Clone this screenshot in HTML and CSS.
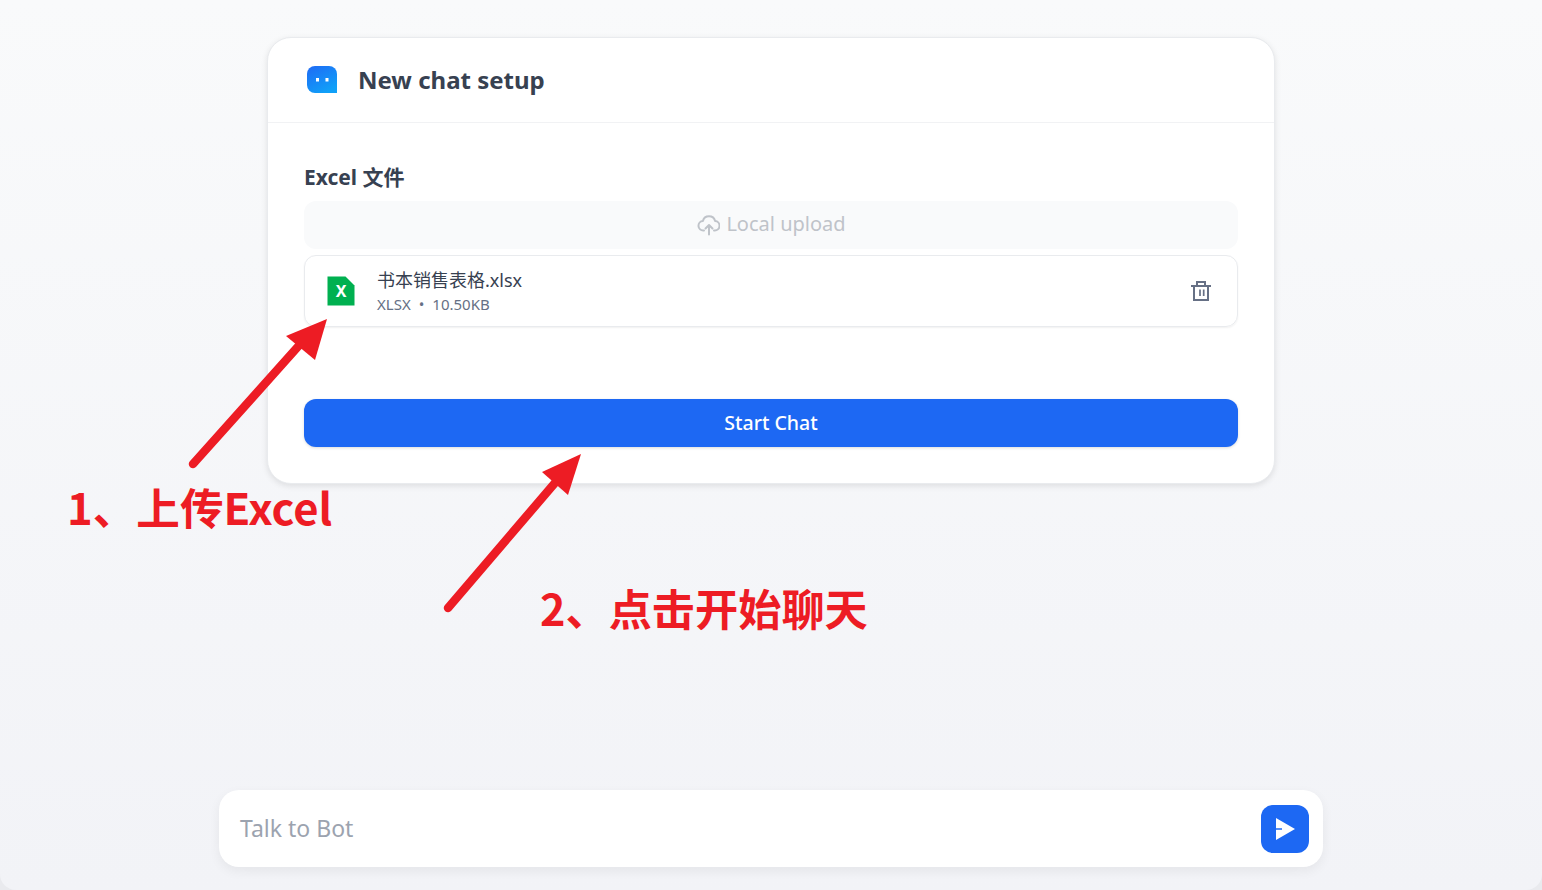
FILE: index.html
```html
<!DOCTYPE html>
<html lang="en">
<head>
    <meta charset="UTF-8">
    <title>New chat setup</title>
    <link rel="stylesheet" href="styles.css">
</head>
<body>
    <main class="page">
        <section class="setup-card">
            <header class="setup-header">
                <svg class="bot-icon" width="30" height="27" viewBox="0 0 30 27">
                    <defs>
                        <linearGradient id="bot-fill" x1="0" y1="0" x2="0.6" y2="1">
                            <stop offset="0" stop-color="#1f6af5"/>
                            <stop offset="1" stop-color="#10a0f8"/>
                        </linearGradient>
                    </defs>
                    <path d="M8 0h14a8 8 0 0 1 8 8v19H8a8 8 0 0 1-8-8V8a8 8 0 0 1 8-8z" fill="url(#bot-fill)"/>
                    <rect x="9" y="12" width="3" height="3.500" fill="#fff"/>
                    <rect x="18.500" y="12" width="3" height="3.500" fill="#fff"/>
                </svg>
                <h1 class="setup-title">New chat setup</h1>
            </header>

            <div class="setup-body">
                <label class="field-label">Excel 文件</label>
                <div class="upload-btn">
                    <svg width="24" height="24" viewBox="-1 0 24 24" fill="none" stroke="#bfc3c9" stroke-width="2" stroke-linecap="round" stroke-linejoin="round">
                        <path d="M7 17.500H6.500a4.700 4.700 0 0 1-.6-9.400 6.300 6.300 0 0 1 12.200 0 4.700 4.700 0 0 1-.6 9.400H17"/>
                        <path d="M12 21.500v-9M8.500 15.500l3.500-3.500 3.500 3.500"/>
                    </svg>
                    <span class="upload-text">Local upload</span>
                </div>

                <div class="file-row">
                    <svg class="file-icon" width="28" height="30" viewBox="0 0 28 30">
                        <path d="M0.500 0.500h18L27.500 9.500v20H0.500z" fill="#00b050"/>
                        <text x="14" y="21" class="file-icon-text">X</text>
                    </svg>
                    <div class="file-info">
                        <div class="file-name">书本销售表格.xlsx</div>
                        <div class="file-meta">XLSX<span class="dot">•</span>10.50KB</div>
                    </div>
                    <svg class="trash-icon" width="20" height="20" viewBox="0 0 20 20" fill="none" stroke="#667085" stroke-width="2">
                        <path d="M0 5h20M6 5V1h8v4M3 5v14h14V5"/>
                        <path d="M9 8.500v6.500M12.700 8.500v6.500" stroke-width="1.700"/>
                    </svg>
                </div>

                <button class="start-btn">Start Chat</button>
            </div>
        </section>

        <div class="composer">
            <span class="composer-placeholder">Talk to Bot</span>
            <div class="send-btn">
                <svg width="19" height="22" viewBox="0 0 19 22">
                    <path d="M0 0l19 11L0 22V11.700h6v-1.400H0z" fill="#fff"/>
                </svg>
            </div>
        </div>
    </main>

    <!-- annotations drawn on top of the screenshot -->
    <svg class="arrows" width="1542" height="890" viewBox="0 0 1542 890">
        <g fill="#ed1c24" stroke="#ed1c24" stroke-linecap="round">
            <path d="M193 464L303 341" stroke-width="8.500" fill="none"/>
            <path d="M327 319L286 336L315 360z" stroke="none"/>
            <path d="M448 608L560 477" stroke-width="8.500" fill="none"/>
            <path d="M581 454L542 472L568 495z" stroke="none"/>
        </g>
    </svg>
    <div class="note note-upload">1、上传Excel</div>
    <div class="note note-start">2、点击开始聊天</div>
</body>
</html>
```

FILE: styles.css
```css
* {
    box-sizing: border-box;
}

html {
    height: 100%;
    background: #e9eaee;
}

body {
    margin: 0;
    height: 100%;
    font-family: "Noto Sans", "Noto Sans CJK SC", sans-serif;
    color: #374151;
    overflow: hidden;
}

.page {
    height: 890px;
    display: flex;
    flex-direction: column;
    align-items: center;
    padding: 37px 0 23px;
    background: linear-gradient(180deg, #f9fafb 0%, #f2f3f7 100%);
    border-radius: 0 0 16px 16px;
}

.setup-card {
    width: 1008px;
    height: 447px;
    background: #fff;
    border: 1px solid #e9ebee;
    border-radius: 24px;
    box-shadow: 0 2px 6px rgba(0, 0, 0, 0.1);
}

.setup-header {
    height: 85px;
    display: flex;
    align-items: center;
    gap: 21px;
    padding: 0 39px 1px;
    border-bottom: 1px solid #f1f2f4;
}

.setup-title {
    margin: 0;
    font-size: 24px;
    font-weight: 700;
    color: #374151;
}

.setup-body {
    padding: 41px 36px 0;
}

.field-label {
    display: block;
    height: 26px;
    line-height: 26px;
    font-size: 21px;
    font-weight: 700;
    color: #374151;
    margin-bottom: 11px;
}

.upload-btn {
    height: 48px;
    display: flex;
    align-items: center;
    justify-content: center;
    gap: 6px;
    background: #f9fafb;
    border-radius: 12px;
    font-size: 20px;
    color: #bfc3c9;
}

.upload-text {
    padding-bottom: 3px;
}

.file-row {
    height: 72px;
    margin-top: 6px;
    display: flex;
    align-items: center;
    padding: 0 26px 0 22px;
    border: 1px solid #e9ebee;
    border-radius: 12px;
    box-shadow: 0 1px 2px rgba(0, 0, 0, 0.06);
}

.file-info {
    flex: 1;
    margin-left: 22px;
}

.file-name {
    font-size: 18px;
    line-height: 26px;
    color: #374151;
}

.file-meta {
    font-size: 15px;
    line-height: 22px;
    color: #667085;
}

.dot {
    margin: 0 8px;
}

.file-icon-text {
    font-family: "Noto Sans", sans-serif;
    font-size: 16px;
    font-weight: 700;
    fill: #fff;
    text-anchor: middle;
}

.start-btn {
    display: block;
    width: 100%;
    height: 48px;
    margin-top: 72px;
    padding: 0 0 2px;
    border: 0;
    border-radius: 12px;
    background: #1d68f3;
    color: #fff;
    font-family: inherit;
    font-size: 19.5px;
    font-weight: 500;
    box-shadow: 0 1px 3px rgba(0, 0, 0, 0.14);
}

.composer {
    width: 1104px;
    height: 77px;
    margin-top: auto;
    display: flex;
    align-items: center;
    justify-content: space-between;
    padding: 0 14px 0 21px;
    background: #fff;
    border-radius: 20px;
    box-shadow: 0 4px 12px rgba(0, 0, 0, 0.06);
}

.composer-placeholder {
    font-size: 23px;
    padding-bottom: 2px;
    color: #9ca3af;
}

.send-btn {
    width: 48px;
    height: 48px;
    display: flex;
    align-items: center;
    justify-content: center;
    background: #1d68f3;
    border-radius: 12px;
}

.arrows {
    position: absolute;
    left: 0;
    top: 0;
    pointer-events: none;
}

.note {
    position: absolute;
    font-family: "Noto Sans CJK SC", "Noto Sans", sans-serif;
    font-weight: 700;
    line-height: 60px;
    color: #ed1c24;
    white-space: nowrap;
}

.note-upload {
    left: 67px;
    top: 476px;
    font-size: 43.6px;
}

.note-start {
    left: 540px;
    top: 577px;
    font-size: 43.2px;
}
```
